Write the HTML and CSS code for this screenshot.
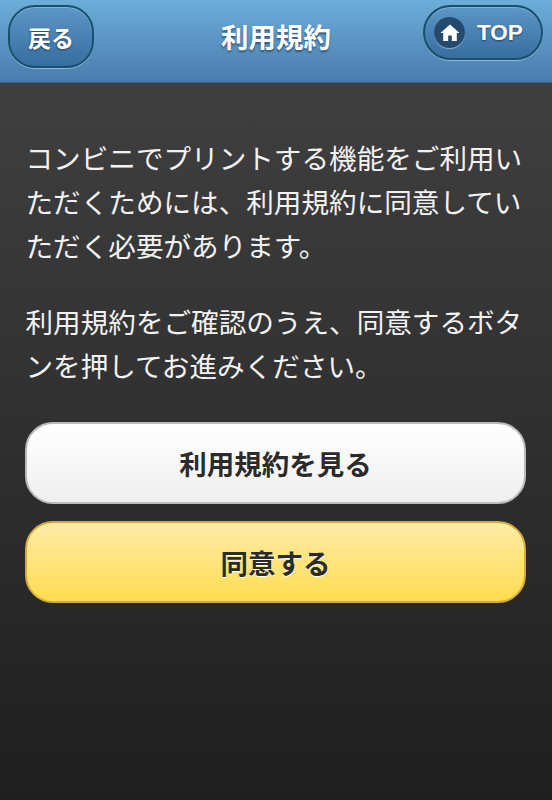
FILE: index.html
```html
<!DOCTYPE html>
<html lang="ja">
<head>
    <meta charset="UTF-8">
    <meta name="viewport" content="width=device-width, initial-scale=1.0">
    <title>利用規約</title>
    <link rel="stylesheet" href="styles.css">
</head>
<body>
    <div class="page">
        <header class="header">
            <a class="nav-btn back-btn">戻る</a>
            <h1 class="title">利用規約</h1>
            <a class="nav-btn top-btn">
                <span class="home-icon">
                    <svg viewBox="0 0 20 18"><path fill="#fff" d="M10 0.5 L19.5 9 L16.8 9 L16.8 17 L11.8 17 L11.8 11.5 L8.2 11.5 L8.2 17 L3.2 17 L3.2 9 L0.5 9 Z"/></svg>
                </span>
                <span class="top-label">TOP</span>
            </a>
        </header>
        <main class="content">
            <p class="text">コンビニでプリントする機能をご利用いただくためには、利用規約に同意していただく必要があります。</p>
            <p class="text">利用規約をご確認のうえ、同意するボタンを押してお進みください。</p>
            <div class="actions">
                <a class="button white-btn">利用規約を見る</a>
                <a class="button yellow-btn">同意する</a>
            </div>
        </main>
    </div>
</body>
</html>
```

FILE: styles.css
```css
* {
    margin: 0;
    padding: 0;
    box-sizing: border-box;
}

body {
    font-family: "Noto Sans CJK JP", "Noto Sans", sans-serif;
    background: #222;
}

.page {
    min-height: 800px;
    background: linear-gradient(#3f3f3f 83px, #3f3f3f 90px, #1f1f1f 800px);
}

.header {
    height: 83px;
    display: flex;
    justify-content: space-between;
    align-items: flex-start;
    padding: 5px 9px 0 8px;
    position: relative;
    background: linear-gradient(#6cadd9, #4a7cae);
    border-bottom: 1px solid #3b5f85;
}

.title {
    position: absolute;
    left: 0;
    right: 0;
    top: 16px;
    text-align: center;
    font-size: 27.5px;
    line-height: 40px;
    font-weight: 700;
    color: #fff;
    text-shadow: 0 2px 2px rgba(0, 0, 0, 0.4);
}

.nav-btn {
    display: flex;
    align-items: center;
    justify-content: center;
    color: #fff;
    font-weight: 700;
    background: linear-gradient(#5c97c6, #386d9f);
    border: 2px solid #15506f;
    box-shadow: 0 1px 0 rgba(255, 255, 255, 0.4), inset 0 1px 0 rgba(255, 255, 255, 0.25);
    text-shadow: 0 1px 2px rgba(0, 0, 0, 0.5);
}

.back-btn {
    width: 86px;
    height: 63px;
    border-radius: 27px;
    font-size: 23px;
}

.top-btn {
    width: 120px;
    height: 55px;
    border-radius: 28px;
    font-size: 22.5px;
    gap: 12px;
    justify-content: flex-start;
    padding-left: 9px;
}

.top-label {
    margin-top: 1px;
    font-family: "Liberation Sans", sans-serif;
    font-weight: 700;
}

.home-icon {
    width: 31px;
    height: 31px;
    border-radius: 50%;
    background: #254a6e;
    box-shadow: 0 1px 0 rgba(255, 255, 255, 0.4);
    display: flex;
    align-items: center;
    justify-content: center;
}

.home-icon svg {
    width: 20px;
    height: 18px;
}

.content {
    padding: 52px 26px 0 25px;
}

.text {
    font-size: 27.6px;
    line-height: 44px;
    color: #f2f2f2;
    margin-bottom: 32px;
    padding-left: 0.5px;
}

.actions {
    display: flex;
    flex-direction: column;
    gap: 17px;
    margin-top: 35px;
}

.button {
    display: flex;
    align-items: center;
    justify-content: center;
    height: 82px;
    border-radius: 28px;
    font-size: 27.5px;
    font-weight: 700;
    color: #2b2b2b;
    text-shadow: 0 1px 1px #fff;
}

.white-btn {
    background: linear-gradient(#fff, #efefef);
    border: 2px solid #bbb;
}

.yellow-btn {
    background: linear-gradient(#ffeda6, #ffdc4f);
    border: 2px solid #d6ab3c;
}
```
